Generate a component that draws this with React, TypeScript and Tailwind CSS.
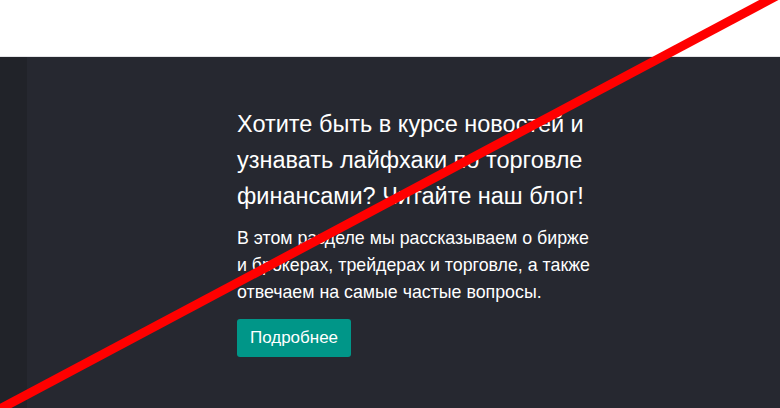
import React from "react";

export default function App() {
  return (
    <div className="relative w-[780px] h-[408px] overflow-hidden bg-white" style={{ fontFamily: '"Liberation Sans", Arial, sans-serif' }}>
      <div className="h-[57px] bg-white border-b border-[#e4e4e7]" />
      <div className="flex h-[351px]">
        <div className="w-[27px] bg-[#212329]" />
        <div className="flex-1 bg-[#262830] pl-[210px] pt-[49px]">
          <div className="w-[362px]">
            <h2 className="text-[23.5px] leading-[36px] text-white font-normal">
              Хотите быть в курсе новостей и узнавать лайфхаки по торговле финансами? Читайте наш блог!
            </h2>
            <p className="mt-[11px] text-[17.8px] leading-[27px] text-white">
              В этом разделе мы рассказываем о бирже и брокерах, трейдерах и торговле, а также отвечаем на самые частые вопросы.
            </p>
            <button className="mt-[13px] h-[38px] w-[114px] rounded-[3px] bg-[#009688] text-[17px] text-white">
              Подробнее
            </button>
          </div>
        </div>
      </div>
      <svg className="absolute inset-0 pointer-events-none" width="780" height="408" viewBox="0 0 780 408">
        <line x1="782" y1="-7" x2="-2" y2="410" stroke="#ff0000" strokeWidth="9" />
      </svg>
    </div>
  );
}
